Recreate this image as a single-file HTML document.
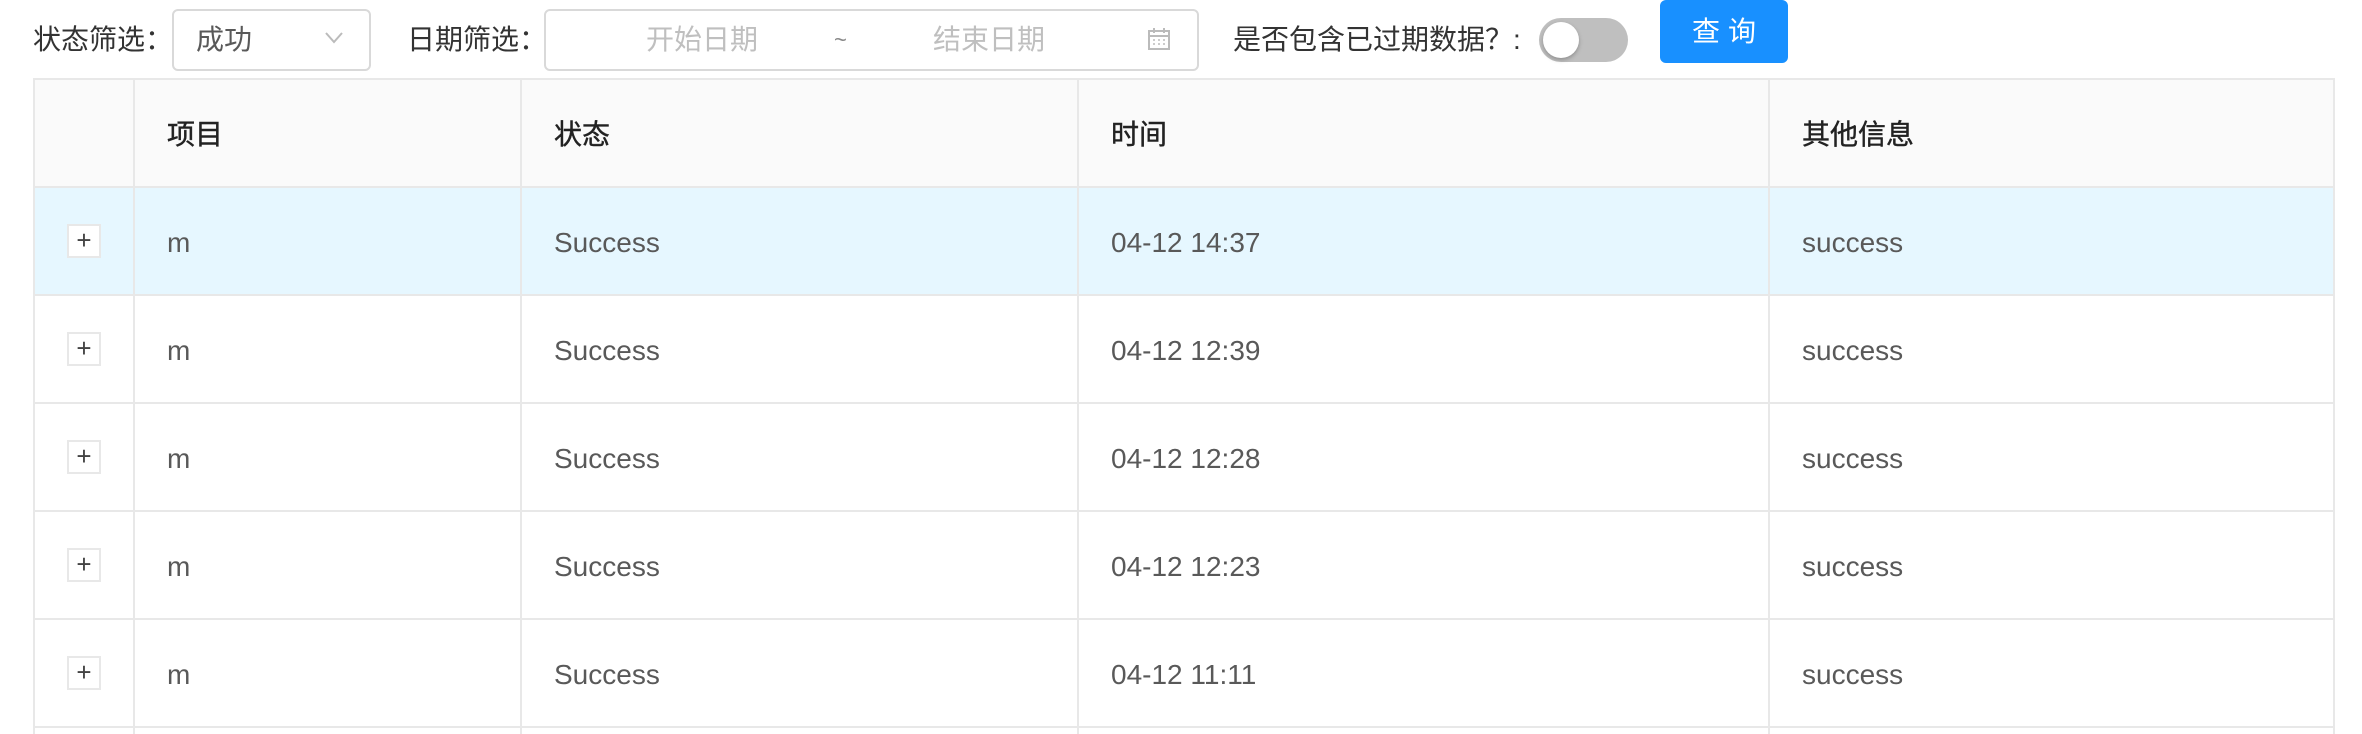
<!DOCTYPE html>
<html style="overflow:hidden;height:734px"><head><meta charset="utf-8"><style>
*{box-sizing:border-box;margin:0;padding:0}
body{width:2362px;height:734px;overflow:hidden;background:#fff;font-family:"Liberation Sans","Noto Sans CJK SC",sans-serif;font-size:28px;color:#595959;position:relative}
.a{position:absolute}
.lbl{color:#333;top:20px;line-height:40px}
.box{border:2px solid #d9d9d9;border-radius:6px;background:#fff}
.wrap{position:absolute;left:33px;top:78px;width:2302px;height:656px;overflow:hidden}
table{width:2302px;border-collapse:collapse;table-layout:fixed}
td,th{border:2px solid #e8e8e8;height:108px;padding:0 0 0 32px;text-align:left;font-weight:normal}
td{padding-top:3px}
th{background:#fafafa;color:#222;font-weight:normal;height:108px;-webkit-text-stroke:0.4px #222}
td.e{padding:0;text-align:center}
.pl{display:inline-block;width:34px;height:34px;border:2px solid #e8e8e8;background:#fff;line-height:28px;font-size:26px;color:#444;text-align:center;vertical-align:middle}
tr.h td{background:#e6f7ff}
</style></head><body>
<div class="a lbl" style="left:33px">状态筛选：</div>
<div class="a box" style="left:172px;top:9px;width:199px;height:62px"></div>
<div class="a" style="left:196px;top:20px;line-height:40px;color:#595959">成功</div>
<svg class="a" style="left:324px;top:31px" width="20" height="14"><path d="M2 2 L10 11 L18 2" fill="none" stroke="#bbb" stroke-width="2"/></svg>
<div class="a lbl" style="left:407px">日期筛选：</div>
<div class="a box" style="left:544px;top:9px;width:655px;height:62px"></div>
<div class="a" style="left:646px;top:20px;line-height:40px;color:#bfbfbf">开始日期</div>
<div class="a" style="left:834px;top:20px;line-height:40px;color:#888;font-size:22px">~</div>
<div class="a" style="left:933px;top:20px;line-height:40px;color:#bfbfbf">结束日期</div>
<svg class="a" style="left:1147px;top:27px" width="24" height="24"><rect x="2" y="4" width="20" height="18" fill="none" stroke="#bbb" stroke-width="2"/><path d="M2 9H22M7 1V6M17 1V6" stroke="#bbb" stroke-width="2"/><path d="M6 13h2M11 13h2M16 13h2M6 17h2M11 17h2M16 17h2" stroke="#bbb" stroke-width="1.5"/></svg>
<div class="a lbl" style="left:1233px">是否包含已过期数据？:</div>
<div class="a" style="left:1539px;top:18px;width:89px;height:44px;border-radius:22px;background:#bfbfbf"></div>
<div class="a" style="left:1543px;top:22px;width:36px;height:36px;border-radius:50%;background:#fff;box-shadow:0 2px 4px rgba(0,0,0,.25)"></div>
<div class="a" style="left:1660px;top:0;width:128px;height:63px;background:#1890ff;border-radius:6px;color:#fff;text-align:center;line-height:63px;letter-spacing:8px;padding-left:8px">查询</div>
<div class="wrap"><table>
<colgroup><col style="width:100px"><col style="width:387px"><col style="width:557px"><col style="width:691px"><col></colgroup>
<tr><th></th><th>项目</th><th>状态</th><th>时间</th><th>其他信息</th></tr>
<tr class="h"><td class="e"><span class="pl">+</span></td><td>m</td><td>Success</td><td>04-12 14:37</td><td>success</td></tr>
<tr><td class="e"><span class="pl">+</span></td><td>m</td><td>Success</td><td>04-12 12:39</td><td>success</td></tr>
<tr><td class="e"><span class="pl">+</span></td><td>m</td><td>Success</td><td>04-12 12:28</td><td>success</td></tr>
<tr><td class="e"><span class="pl">+</span></td><td>m</td><td>Success</td><td>04-12 12:23</td><td>success</td></tr>
<tr><td class="e"><span class="pl">+</span></td><td>m</td><td>Success</td><td>04-12 11:11</td><td>success</td></tr>
<tr><td class="e"></td><td></td><td></td><td></td><td></td></tr>
</table></div>
</body></html>
